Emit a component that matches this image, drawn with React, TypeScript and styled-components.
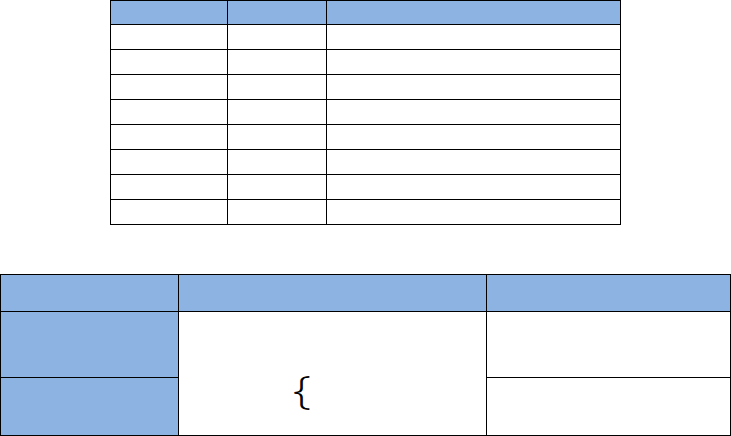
import React from "react";
import styled, { createGlobalStyle } from "styled-components";

const GlobalStyle = createGlobalStyle`
  html, body {
    margin: 0;
    padding: 0;
    background: #ffffff;
    font-family: "Liberation Sans", Arial, sans-serif;
  }
`;

const Page = styled.div`
  width: 731px;
  height: 436px;
  display: flex;
  flex-direction: column;
  align-items: flex-start;
`;

const Grid = styled.div<{ $cols: string; $rows: string; $offset?: number }>`
  display: grid;
  grid-template-columns: ${(p) => p.$cols};
  grid-template-rows: ${(p) => p.$rows};
  gap: 1px;
  padding: 1px;
  background: #000000;
  margin-left: ${(p) => p.$offset ?? 0}px;
`;

const Cell = styled.div<{ $shaded?: boolean; $span?: number }>`
  background: ${(p) => (p.$shaded ? "#8db3e2" : "#ffffff")};
  grid-row: ${(p) => (p.$span ? `span ${p.$span}` : "auto")};
`;

const Spacer = styled.div`
  height: 49px;
`;

const BraceCell = styled(Cell)`
  display: flex;
  align-items: flex-start;
  padding: 58px 0 0 114px;
`;

// the brace in the document is wider than any installed font's glyph
const Brace = styled.span`
  display: inline-block;
  font-family: "Open Sans", sans-serif;
  font-size: 38px;
  font-weight: 300;
  line-height: 1;
  color: #000000;
  transform: scaleX(1.35);
  transform-origin: left top;
`;

const dataRows = Array.from({ length: 8 }, (_, i) => i);

export default function App() {
  return (
    <Page>
      <GlobalStyle />
      <Grid $cols="116px 98px 293px" $rows="23px repeat(8, 24px)" $offset={110}>
        <Cell $shaded />
        <Cell $shaded />
        <Cell $shaded />
        {dataRows.map((r) => (
          <React.Fragment key={r}>
            <Cell />
            <Cell />
            <Cell />
          </React.Fragment>
        ))}
      </Grid>
      <Spacer />
      <Grid $cols="177px 307px 243px" $rows="36px 65px 57px">
        <Cell $shaded />
        <Cell $shaded />
        <Cell $shaded />
        <Cell $shaded />
        <BraceCell $span={2}>
          <Brace>{"{"}</Brace>
        </BraceCell>
        <Cell />
        <Cell $shaded />
        <Cell />
      </Grid>
    </Page>
  );
}
